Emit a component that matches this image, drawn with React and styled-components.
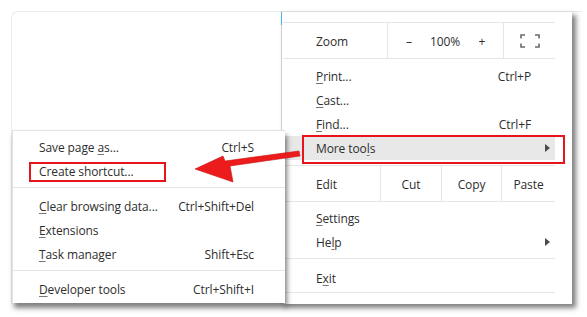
import React from "react";
import styled, { createGlobalStyle } from "styled-components";

const Global = createGlobalStyle`
  html, body { margin: 0; padding: 0; background: #ffffff; }
  body { font-family: "Open Sans", "Noto Sans", sans-serif; font-size: 12px; color: #2e2e2e; letter-spacing: -0.1px; }
`;

const Stage = styled.div`
  position: relative;
  width: 587px;
  height: 317px;
  overflow: hidden;
  background: #ffffff;
`;

const BrowserWindow = styled.div`
  position: absolute;
  left: 11px;
  top: 11px;
  width: 570px;
  height: 292px;
  border-top: 1px solid #ebebeb;
  border-left: 1px solid #ebebeb;
  border-top-left-radius: 7px;
`;

const MainMenu = styled.div`
  position: absolute;
  left: 281px;
  top: 11px;
  width: 291px;
  height: 293px;
  background: #ffffff;
  border-top: 1px solid #dcdcdc;
  border-left: 1px solid #cfcfcf;
  box-shadow: 4px 4px 5px rgba(0, 0, 0, 0.5);
  display: flex;
  flex-direction: column;
  padding: 10px 17px 0 1px;
  box-sizing: border-box;
  &::before {
    content: "";
    position: absolute;
    left: -1px;
    top: 0;
    width: 1px;
    height: 13px;
    background: #47b0ea;
  }
`;

const SubMenu = styled.div`
  position: absolute;
  left: 12px;
  top: 130px;
  width: 273px;
  height: 173px;
  background: #ffffff;
  border-top: 1px solid #e2e2e2;
  border-left: 1px solid #e2e2e2;
  box-sizing: border-box;
  box-shadow: 2px 5px 5px rgba(0, 0, 0, 0.5);
  display: flex;
  flex-direction: column;
  padding-top: 4px;
`;

const Group = styled.div`
  display: flex;
  flex-direction: column;
  padding-top: ${(p) => p.$top ?? 4}px;
  padding-bottom: ${(p) => p.$bottom ?? 4}px;
`;

const Separator = styled.div`
  height: 1px;
  background: #e6e6e6;
`;

const Item = styled.div`
  height: 24px;
  box-sizing: border-box;
  display: flex;
  align-items: center;
  justify-content: space-between;
  padding-top: 2px;
  padding-left: ${(p) => p.$left}px;
  padding-right: ${(p) => p.$right}px;
  background: ${(p) => (p.$active ? "#e8e8e8" : "transparent")};
  white-space: nowrap;
  line-height: 20px;
`;

const Shortcut = styled.span`
  color: #2e2e2e;
`;

const Key = styled.span`
  text-decoration: underline;
  text-decoration-thickness: 1px;
  text-underline-offset: 2px;
  text-decoration-color: #777;
`;

const Caret = styled.span`
  width: 0;
  height: 0;
  border-top: 4px solid transparent;
  border-bottom: 4px solid transparent;
  border-left: 5px solid #4a4a4a;
  margin-right: -19px;
  margin-top: -2px;
`;

const SplitRow = styled.div`
  display: grid;
  grid-template-columns: ${(p) => p.$cols};
  border-top: 1px solid #e6e6e6;
  border-bottom: 1px solid #e6e6e6;
  box-sizing: border-box;
  height: 37px;
`;

const Cell = styled.div`
  display: flex;
  align-items: center;
  justify-content: ${(p) => (p.$label ? "flex-start" : "center")};
  padding-left: ${(p) => (p.$label ? "33px" : "0")};
  padding-top: ${(p) => (p.$icon ? "0" : "2px")};
  border-left: ${(p) => (p.$divider ? "1px solid #e6e6e6" : "none")};
  white-space: nowrap;
`;

const ZoomControls = styled.div`
  display: grid;
  grid-template-columns: 42px 30px 44px;
  align-items: center;
  justify-items: center;
  padding-top: 2px;
  border-left: 1px solid #e6e6e6;
`;

const Annotation = styled.div`
  position: absolute;
  left: ${(p) => p.$x}px;
  top: ${(p) => p.$y}px;
  width: ${(p) => p.$w}px;
  height: ${(p) => p.$h}px;
  border: 2px solid #e8141b;
  box-sizing: border-box;
  pointer-events: none;
`;

const ArrowLayer = styled.svg`
  position: absolute;
  left: 0;
  top: 0;
  pointer-events: none;
`;

const FullscreenIcon = () => (
  <svg width="20" height="14" viewBox="0 0 20 14" fill="none" stroke="#6a6a6a" strokeWidth="1.6">
    <path d="M1 4.5V1H5" />
    <path d="M15 1H19V4.5" />
    <path d="M19 9.5V13H15" />
    <path d="M5 13H1V9.5" />
  </svg>
);

const SubRow = ({ children, shortcut }) => (
  <Item $left={26} $right={31}>
    <span>{children}</span>
    {shortcut && <Shortcut>{shortcut}</Shortcut>}
  </Item>
);

const MainRow = ({ children, shortcut, sub, active }) => (
  <Item $left={33} $right={24} $active={active}>
    <span>{children}</span>
    {shortcut && <Shortcut>{shortcut}</Shortcut>}
    {sub && <Caret />}
  </Item>
);

export default function App() {
  return (
    <Stage>
      <Global />
      <BrowserWindow />
      <MainMenu>
        <SplitRow $cols="104px 116px 1fr">
          <Cell $label>Zoom</Cell>
          <ZoomControls>
            <span>–</span>
            <span>100%</span>
            <span>+</span>
          </ZoomControls>
          <Cell $divider $icon>
            <FullscreenIcon />
          </Cell>
        </SplitRow>
        <Group $top={5} $bottom={5}>
          <MainRow shortcut="Ctrl+P"><Key>P</Key>rint...</MainRow>
          <MainRow><Key>C</Key>ast...</MainRow>
          <MainRow shortcut="Ctrl+F"><Key>F</Key>ind...</MainRow>
          <MainRow sub active>More too<Key>l</Key>s</MainRow>
        </Group>
        <SplitRow $cols="97px 61px 60px 1fr">
          <Cell $label>Edit</Cell>
          <Cell $divider>Cut</Cell>
          <Cell $divider>Copy</Cell>
          <Cell $divider>Paste</Cell>
        </SplitRow>
        <Group $top={4} $bottom={4}>
          <MainRow><Key>S</Key>ettings</MainRow>
          <MainRow sub>He<Key>l</Key>p</MainRow>
        </Group>
        <Separator />
        <Group $top={7} $bottom={2}>
          <MainRow>E<Key>x</Key>it</MainRow>
        </Group>
        <Separator />
      </MainMenu>
      <SubMenu>
        <Group $top={0} $bottom={4}>
          <SubRow shortcut="Ctrl+S">Save page <Key>a</Key>s...</SubRow>
          <SubRow>Create shortcut...</SubRow>
        </Group>
        <Separator />
        <Group $top={6} $bottom={4}>
          <SubRow shortcut="Ctrl+Shift+Del"><Key>C</Key>lear browsing data...</SubRow>
          <SubRow><Key>E</Key>xtensions</SubRow>
          <SubRow shortcut="Shift+Esc"><Key>T</Key>ask manager</SubRow>
        </Group>
        <Separator />
        <Group $top={6} $bottom={0}>
          <SubRow shortcut="Ctrl+Shift+I"><Key>D</Key>eveloper tools</SubRow>
        </Group>
      </SubMenu>
      <Annotation $x={302} $y={135} $w={263} $h={29} />
      <Annotation $x={29} $y={162} $w={137} $h={20} />
      <ArrowLayer width="587" height="317" viewBox="0 0 587 317">
        <polygon
          points="195,169 223,156 225,161 299,151 300,156 230,166 233,182"
          fill="#ec1c1c"
          stroke="#c40f0f"
          strokeWidth="0.6"
          strokeLinejoin="round"
        />
      </ArrowLayer>
    </Stage>
  );
}
